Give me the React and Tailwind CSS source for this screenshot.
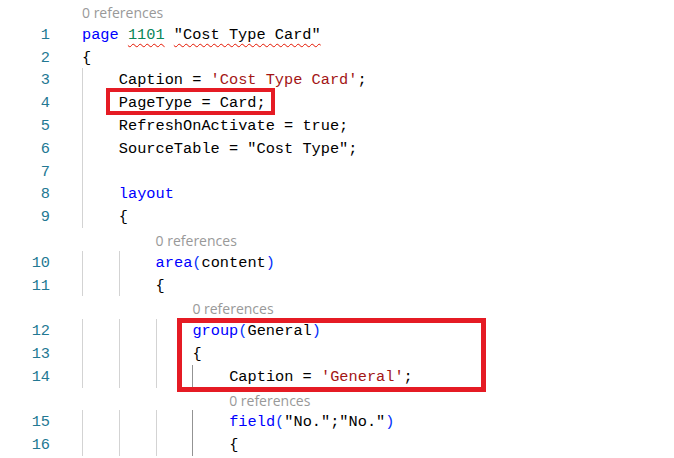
import React from 'react';

// token helpers
const K = ({ children }) => <span className="text-[#0000ff]">{children}</span>;
const S = ({ children }) => <span className="text-[#a31515]">{children}</span>;
const P = ({ children }) => <span className="text-[#0431fa]">{children}</span>;
const Sq = ({ children, className = '' }) => (
  <span className={`underline decoration-wavy decoration-[#e51400] decoration-1 underline-offset-[4px] ${className}`}>
    {children}
  </span>
);

// indent units: 'g' = light guide, 'd' = active (dark) guide, ' ' = no guide
const Indent = ({ guides }) => (
  <>
    {guides.split('').map((g, i) => (
      <span
        key={i}
        className={`inline-block w-[36.8px] h-full shrink-0 ${
          g === 'g' ? 'border-l border-[#d3d3d3]' : g === 'd' ? 'border-l border-[#939393]' : ''
        }`}
      />
    ))}
  </>
);

const rows = [
  { lens: true, indent: '' },
  { n: 1, indent: '', code: <><K>page</K> <Sq className="text-[#098658]">1101</Sq> <Sq>"Cost Type Card"</Sq></> },
  { n: 2, indent: '', code: '{' },
  { n: 3, indent: 'g', code: <>Caption = <S>'Cost Type Card'</S>;</> },
  { n: 4, indent: 'g', code: 'PageType = Card;' },
  { n: 5, indent: 'g', code: 'RefreshOnActivate = true;' },
  { n: 6, indent: 'g', code: 'SourceTable = "Cost Type";' },
  { n: 7, indent: 'g', code: '' },
  { n: 8, indent: 'g', code: <K>layout</K> },
  { n: 9, indent: 'g', code: '{' },
  { lens: true, indent: '  ' },
  { n: 10, indent: 'gg', code: <><K>area</K><P>(</P>content<P>)</P></> },
  { n: 11, indent: 'gg', code: '{' },
  { lens: true, indent: '   ' },
  { n: 12, indent: 'ggg', code: <><K>group</K><P>(</P>General<P>)</P></> },
  { n: 13, indent: 'ggg', code: '{' },
  { n: 14, indent: 'gggd', code: <>Caption = <S>'General'</S>;</> },
  { lens: true, indent: '    ' },
  { n: 15, indent: 'gggd', code: <><K>field</K><P>(</P>"No.";"No."<P>)</P></> },
  { n: 16, indent: 'gggd', code: '{' },
];

const App = () => {
  return (
    <div className="relative w-[674px] h-[458px] overflow-hidden bg-white font-['Liberation_Mono',monospace] text-[15.3px] text-black">
      <div className="flex flex-col">
        {rows.map((r, i) => (
          <div key={i} className="flex h-[22.8px] items-stretch">
            <div className="w-[50px] shrink-0 text-right leading-[22.8px] pt-[1px] text-[#237893]">{r.n || ''}</div>
            <div className="w-[32px] shrink-0" />
            {r.lens ? (
              <div className="flex items-stretch">
                {r.indent.split('').map((_, j) => (
                  <span key={j} className="inline-block w-[36.8px] shrink-0" />
                ))}
                <span className="font-['Open_Sans',sans-serif] text-[14px] leading-[22.8px] pt-[2px] text-[#999999]">
                  0 references
                </span>
              </div>
            ) : (
              <div className="flex items-stretch">
                <Indent guides={r.indent} />
                <span className="whitespace-pre leading-[22.8px] pt-[1px]">{r.code}</span>
              </div>
            )}
          </div>
        ))}
      </div>

      {/* annotation boxes */}
      <div className="absolute left-[106px] top-[88px] w-[169px] h-[27px] border-4 border-[#e51b24]" />
      <div className="absolute left-[177px] top-[318px] w-[309px] h-[74px] border-[5px] border-[#e51b24]" />
    </div>
  );
};

export default App;
